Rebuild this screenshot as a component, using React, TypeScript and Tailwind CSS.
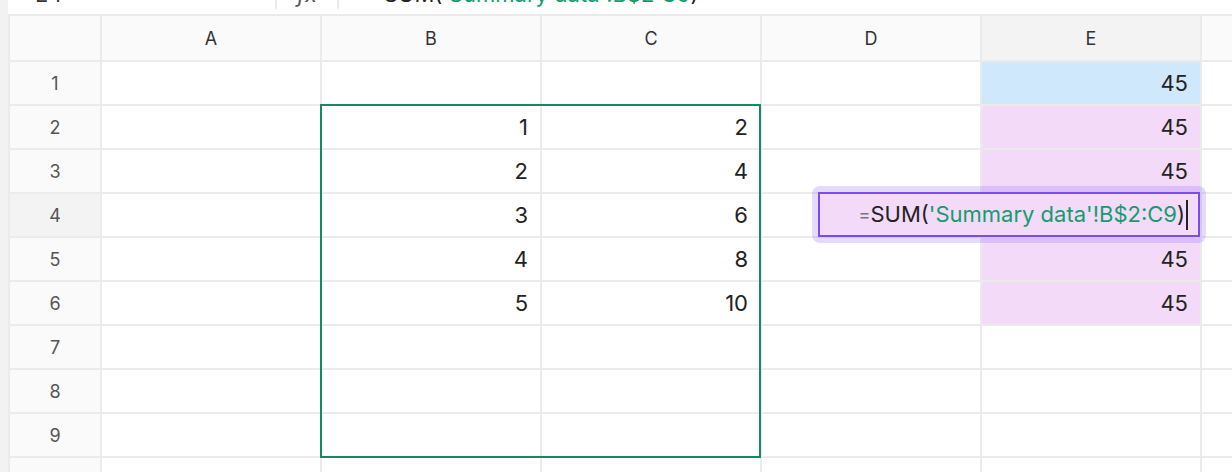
import React from "react";

const COLS = ["A", "B", "C", "D", "E"];

type Row = { n: number; b?: string; c?: string; e?: string; tone?: "blue" | "purple" };

const ROWS: Row[] = [
  { n: 1, e: "45", tone: "blue" },
  { n: 2, b: "1", c: "2", e: "45", tone: "purple" },
  { n: 3, b: "2", c: "4", e: "45", tone: "purple" },
  { n: 4, b: "3", c: "6", e: "45", tone: "purple" },
  { n: 5, b: "4", c: "8", e: "45", tone: "purple" },
  { n: 6, b: "5", c: "10", e: "45", tone: "purple" },
  { n: 7 },
  { n: 8 },
  { n: 9 },
  { n: 10 },
];

const SELECTED_ROW = 4;

function Formula({ green = "text-[#149c6e]" }: { green?: string }) {
  return (
    <>
      <span className="text-[#777] text-[18px]">=</span>
      <span className="text-[#222]">SUM(</span>
      <span className={green}>'Summary data'!B$2:C9</span>
      <span className="text-[#222]">)</span>
    </>
  );
}

function Cell({ value, bg = "bg-white" }: { value?: string; bg?: string }) {
  return (
    <div className={`${bg} flex items-center justify-end pr-3 text-[22px] text-[#222]`}>
      {value}
    </div>
  );
}

export default function App() {
  return (
    <div
      className="relative w-[1232px] h-[472px] overflow-hidden bg-white flex"
      style={{ fontFamily: "Inter, 'Noto Sans', sans-serif" }}
    >
      {/* left gutter */}
      <div className="w-[8px] shrink-0 bg-[#f2f2f2]" />

      <div className="flex-1 flex flex-col">
        {/* formula bar, mostly scrolled off the top */}
        <div className="-mt-[26px] h-[40px] shrink-0 flex items-center text-[22px] text-[#333]">
          <div className="w-[267px] pl-[27px]">E4</div>
          <div className="w-[2px] h-[30px] bg-[#ebebeb]" />
          <div className="w-[60px] text-center italic text-[#555]">fx</div>
          <div className="w-[2px] h-[30px] bg-[#ebebeb]" />
          <div className="pl-[33px] whitespace-nowrap">
            <Formula />
          </div>
        </div>

        {/* grid */}
        <div className="grid grid-cols-[90px_repeat(5,218px)_1fr] grid-rows-[44px] auto-rows-[42px] gap-[2px] bg-[#ebebeb] pt-[2px] pl-[2px]">
          <div className="bg-[#fafafa]" />
          {COLS.map((c) => (
            <div
              key={c}
              className={`${c === "E" ? "bg-[#f3f3f3]" : "bg-[#fafafa]"} flex items-center justify-center text-[18px] text-[#333]`}
            >
              {c}
            </div>
          ))}
          <div className="bg-[#fafafa]" />

          {ROWS.map((r) => (
            <React.Fragment key={r.n}>
              <div
                className={`${r.n === SELECTED_ROW ? "bg-[#f3f3f3]" : "bg-[#fafafa]"} flex items-center justify-center text-[18px] text-[#555]`}
              >
                {r.n}
              </div>
              <Cell />
              <Cell value={r.b} />
              <Cell value={r.c} />
              <Cell />
              <Cell
                value={r.n === SELECTED_ROW ? "" : r.e}
                bg={r.tone === "blue" ? "bg-[#d0e8fc]" : r.tone === "purple" ? "bg-[#f2daf8]" : "bg-white"}
              />
              <Cell />
            </React.Fragment>
          ))}
        </div>
      </div>

      {/* referenced range B2:C9 */}
      <div className="absolute left-[320px] top-[104px] w-[441px] h-[354px] border-2 border-[#128a62] pointer-events-none" />

      {/* in-cell editor */}
      <div className="absolute left-[812px] top-[186px] w-[394px] h-[57px] rounded-[8px] bg-[#7c4dff]/20 p-[6px]">
        <div className="h-full border-2 border-[#7b4bf0] bg-[#f2daf8] flex items-center justify-end pr-[10px] text-[22px] whitespace-nowrap">
          <Formula />
          <span className="ml-[1px] w-[2px] h-[30px] bg-[#222]" />
        </div>
      </div>
    </div>
  );
}
